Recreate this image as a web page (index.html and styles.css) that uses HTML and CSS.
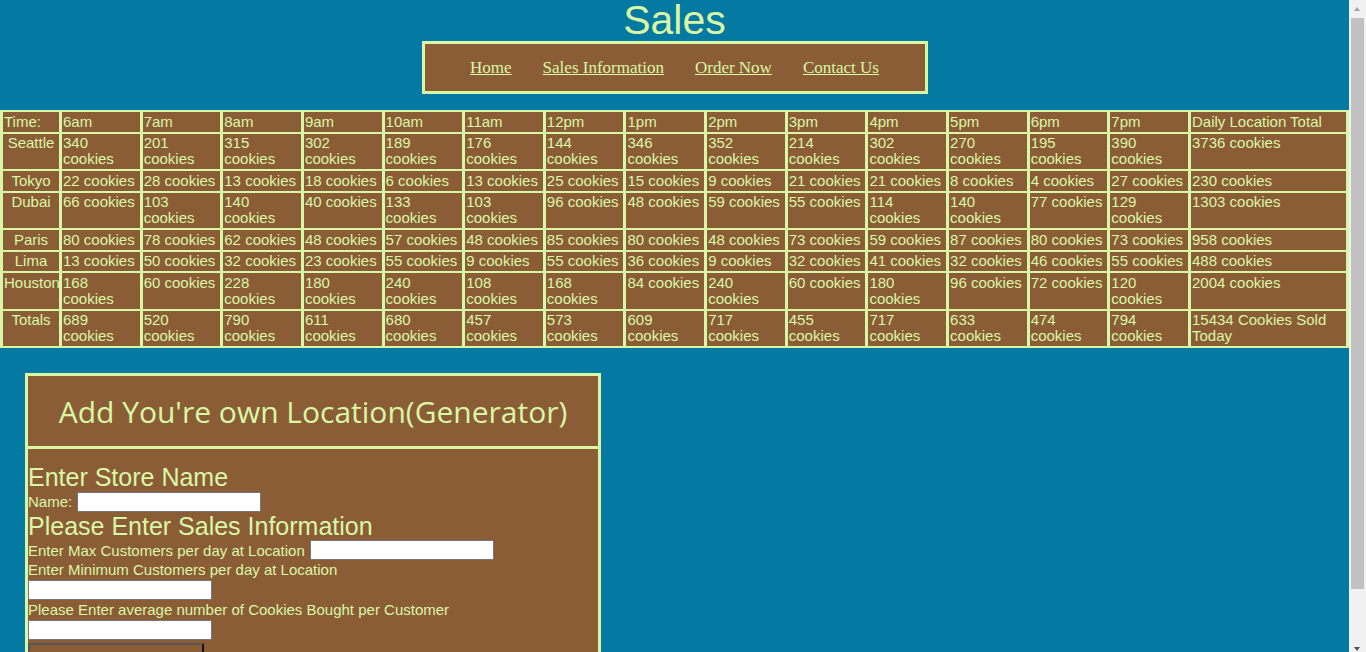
FILE: index.html
```html
<!DOCTYPE html>
<html lang="en">
<head>
<meta charset="utf-8">
<title>Sales</title>
<link rel="stylesheet" href="styles.css">
</head>
<body>
<h1 class="title">Sales</h1>
<nav class="nav">
  <a href="#">Home</a>
  <a href="#">Sales Information</a>
  <a href="#">Order Now</a>
  <a href="#">Contact Us</a>
</nav>
<table class="sales">
  <tr><td class="c-time">Time:</td><td>6am</td><td>7am</td><td>8am</td><td>9am</td><td>10am</td><td>11am</td><td>12pm</td><td>1pm</td><td>2pm</td><td>3pm</td><td>4pm</td><td>5pm</td><td>6pm</td><td>7pm</td><td class="c-total">Daily Location Total</td></tr>
  <tr><td class="loc">Seattle</td><td>340 cookies</td><td>201 cookies</td><td>315 cookies</td><td>302 cookies</td><td>189 cookies</td><td>176 cookies</td><td>144 cookies</td><td>346 cookies</td><td>352 cookies</td><td>214 cookies</td><td>302 cookies</td><td>270 cookies</td><td>195 cookies</td><td>390 cookies</td><td>3736 cookies</td></tr>
  <tr><td class="loc">Tokyo</td><td>22 cookies</td><td>28 cookies</td><td>13 cookies</td><td>18 cookies</td><td>6 cookies</td><td>13 cookies</td><td>25 cookies</td><td>15 cookies</td><td>9 cookies</td><td>21 cookies</td><td>21 cookies</td><td>8 cookies</td><td>4 cookies</td><td>27 cookies</td><td>230 cookies</td></tr>
  <tr><td class="loc">Dubai</td><td>66 cookies</td><td>103 cookies</td><td>140 cookies</td><td>40 cookies</td><td>133 cookies</td><td>103 cookies</td><td>96 cookies</td><td>48 cookies</td><td>59 cookies</td><td>55 cookies</td><td>114 cookies</td><td>140 cookies</td><td>77 cookies</td><td>129 cookies</td><td>1303 cookies</td></tr>
  <tr><td class="loc">Paris</td><td>80 cookies</td><td>78 cookies</td><td>62 cookies</td><td>48 cookies</td><td>57 cookies</td><td>48 cookies</td><td>85 cookies</td><td>80 cookies</td><td>48 cookies</td><td>73 cookies</td><td>59 cookies</td><td>87 cookies</td><td>80 cookies</td><td>73 cookies</td><td>958 cookies</td></tr>
  <tr><td class="loc">Lima</td><td>13 cookies</td><td>50 cookies</td><td>32 cookies</td><td>23 cookies</td><td>55 cookies</td><td>9 cookies</td><td>55 cookies</td><td>36 cookies</td><td>9 cookies</td><td>32 cookies</td><td>41 cookies</td><td>32 cookies</td><td>46 cookies</td><td>55 cookies</td><td>488 cookies</td></tr>
  <tr><td class="loc">Houston</td><td>168 cookies</td><td>60 cookies</td><td>228 cookies</td><td>180 cookies</td><td>240 cookies</td><td>108 cookies</td><td>168 cookies</td><td>84 cookies</td><td>240 cookies</td><td>60 cookies</td><td>180 cookies</td><td>96 cookies</td><td>72 cookies</td><td>120 cookies</td><td>2004 cookies</td></tr>
  <tr><td class="loc">Totals</td><td>689 cookies</td><td>520 cookies</td><td>790 cookies</td><td>611 cookies</td><td>680 cookies</td><td>457 cookies</td><td>573 cookies</td><td>609 cookies</td><td>717 cookies</td><td>455 cookies</td><td>717 cookies</td><td>633 cookies</td><td>474 cookies</td><td>794 cookies</td><td>15434 Cookies Sold Today</td></tr>
</table>
<section class="gen">
  <h2 class="gen-title">Add You're own Location(Generator)</h2>
  <form class="gen-body">
    <h3 class="sub">Enter Store Name</h3>
    <div class="row"><label class="lbl" for="name">Name:</label><input class="inp inline" id="name" type="text"></div>
    <h3 class="sub">Please Enter Sales Information</h3>
    <div class="row tight"><label class="lbl" for="max">Enter Max Customers per day at Location</label><input class="inp inline" id="max" type="text"></div>
    <label class="lbl block" for="min">Enter Minimum Customers per day at Location</label>
    <input class="inp block-inp" id="min" type="text">
    <label class="lbl block" for="avg">Please Enter average number of Cookies Bought per Customer</label>
    <input class="inp block-inp" id="avg" type="text">
    <button class="submit" type="button">Submit</button>
  </form>
</section>
<div class="scrollbar" aria-hidden="true">
  <div class="sb-btn"><span class="arrow-up"></span></div>
  <div class="sb-track"><div class="sb-thumb"></div></div>
  <div class="sb-btn sb-btn-down"><span class="arrow-down"></span></div>
</div>
</body>
</html>
```
FILE: styles.css
```css
html {
  background: #0479a2;
}
body {
  margin: 0 17px 0 0;
  padding-bottom: 25px;
  background: #0479a2;
  color: #daf7a6;
  font-family: "Liberation Sans", Arial, sans-serif;
}
.title {
  margin: 0;
  font-family: "Liberation Sans", Arial, sans-serif;
  font-weight: normal;
  font-size: 41px;
  line-height: 41px;
  text-align: center;
  color: #daf7a6;
}
.nav {
  width: 500px;
  height: 47px;
  margin: 0 auto 16px;
  border: 3px solid #daf7a6;
  background: #8b5d36;
  display: flex;
  align-items: center;
  justify-content: center;
  gap: 31px;
}
.nav a {
  font-family: "Liberation Serif", "Times New Roman", serif;
  font-size: 17px;
  color: #daf7a6;
  text-decoration: underline;
}
.sales {
  width: 100%;
  table-layout: fixed;
  border-collapse: separate;
  border-spacing: 3px 2px;
  background: #daf7a6;
  font-family: "Liberation Sans", Arial, sans-serif;
  font-size: 15px;
  line-height: 16px;
  color: #daf7a6;
}
.sales td {
  box-sizing: border-box;
  background: #8b5d36;
  padding: 1.5px 1px 2px;
  vertical-align: top;
  text-align: left;
}
.sales td.c-time {
  width: 56px;
}
.sales td.c-total {
  width: 155px;
}
.sales td.loc {
  text-align: center;
}
.gen {
  width: 570px;
  margin: 25px 0 0 25px;
  border: 3px solid #daf7a6;
  background: #8b5d36;
}
.gen-title {
  margin: 0;
  height: 70px;
  border-bottom: 3px solid #daf7a6;
  display: flex;
  align-items: center;
  justify-content: center;
  font-family: "Open Sans", sans-serif;
  font-weight: normal;
  font-size: 30px;
  color: #daf7a6;
}
.gen-body {
  margin: 0;
  padding: 14px 0 2px;
}
.sub {
  margin: 0;
  font-family: "Liberation Sans", Arial, sans-serif;
  font-weight: normal;
  font-size: 25px;
  line-height: 28px;
  color: #daf7a6;
}
.row {
  display: flex;
  align-items: center;
  height: 21px;
}
.row.tight {
  height: 20px;
}
.lbl {
  font-size: 15px;
  line-height: 17px;
  color: #daf7a6;
}
.lbl.block {
  display: block;
  line-height: 19px;
}
.inp {
  box-sizing: border-box;
  width: 184px;
  height: 20px;
  margin: 0;
  padding: 0 2px;
  border: 1px solid #767676;
  background: #ffffff;
  font-size: 13px;
}
.inp.inline {
  margin-left: 5px;
}
.inp.block-inp {
  display: block;
  margin-top: 1px;
}
.submit {
  display: block;
  box-sizing: border-box;
  width: 176px;
  height: 36px;
  margin-top: 3px;
  padding: 14px 0 0;
  border: 2px solid #555555;
  border-right-color: #111111;
  border-bottom-color: #111111;
  background: #8b5d36;
  color: #daf7a6;
  font-family: "Liberation Sans", Arial, sans-serif;
  font-size: 15px;
  line-height: 17px;
}
.scrollbar {
  position: fixed;
  top: 0;
  right: 0;
  width: 17px;
  height: 100vh;
  background: #f1f1f1;
  display: flex;
  flex-direction: column;
}
.sb-btn {
  height: 17px;
  flex: none;
  position: relative;
}
.sb-track {
  flex: 1;
  padding: 1px 2px 0;
}
.sb-thumb {
  height: 571px;
  background: #c1c1c1;
}
.arrow-up {
  position: absolute;
  left: 5px;
  top: 7px;
  width: 0;
  height: 0;
  border-left: 3.5px solid transparent;
  border-right: 3.5px solid transparent;
  border-bottom: 4px solid #a3a3a3;
}
.arrow-down {
  position: absolute;
  left: 5px;
  top: 12px;
  width: 0;
  height: 0;
  border-left: 3.5px solid transparent;
  border-right: 3.5px solid transparent;
  border-top: 4px solid #505050;
}
```
